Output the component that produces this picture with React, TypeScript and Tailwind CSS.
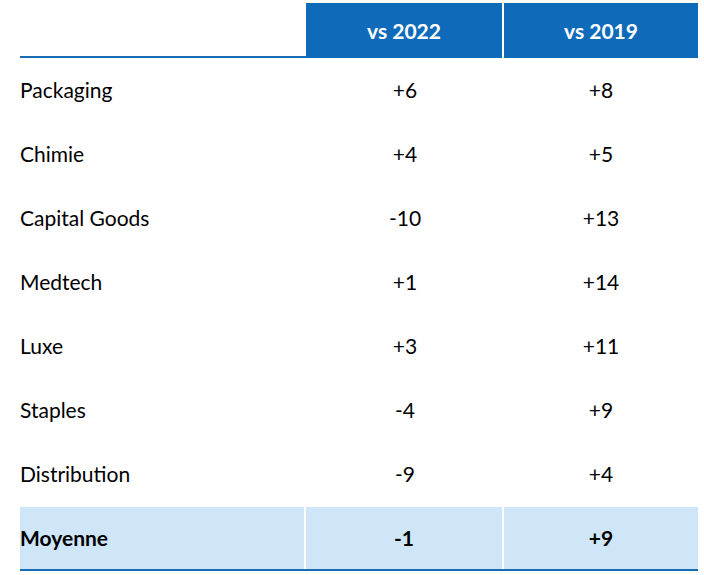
const rows: [string, string, string][] = [
  ['Packaging', '+6', '+8'],
  ['Chimie', '+4', '+5'],
  ['Capital Goods', '-10', '+13'],
  ['Medtech', '+1', '+14'],
  ['Luxe', '+3', '+11'],
  ['Staples', '-4', '+9'],
  ['Distribution', '-9', '+4'],
];

export default function App() {
  return (
    <div className="w-[704px] h-[575px] bg-white pt-[3px] pl-[20px] text-black" style={{ fontFamily: 'Lato, "Open Sans", sans-serif' }}>
      <div className="w-[678px]">
        {/* header */}
        <div className="grid grid-cols-[286px_198px_194px] h-[55px]">
          <div className="border-b-2 border-[#176cb4]" />
          <div className="bg-[#0f6bba] text-white font-bold text-[21px] flex items-center justify-center border-r-2 border-white">
            vs 2022
          </div>
          <div className="bg-[#0f6bba] text-white font-bold text-[21px] flex items-center justify-center">
            vs 2019
          </div>
        </div>

        {rows.map(([label, a, b]) => (
          <div key={label} className="grid grid-cols-[286px_198px_194px] h-[64px] items-center text-[21px]">
            <div>{label}</div>
            <div className="text-center">{a}</div>
            <div className="text-center">{b}</div>
          </div>
        ))}

        {/* average */}
        <div className="mt-[1px] grid grid-cols-[286px_198px_194px] h-[64px] text-[21px] font-bold border-b-2 border-[#176cb4]">
          <div className="bg-[#cfe6f9] flex items-center border-r-2 border-white">Moyenne</div>
          <div className="bg-[#cfe6f9] flex items-center justify-center border-r-2 border-white">-1</div>
          <div className="bg-[#cfe6f9] flex items-center justify-center">+9</div>
        </div>
      </div>
    </div>
  );
}
